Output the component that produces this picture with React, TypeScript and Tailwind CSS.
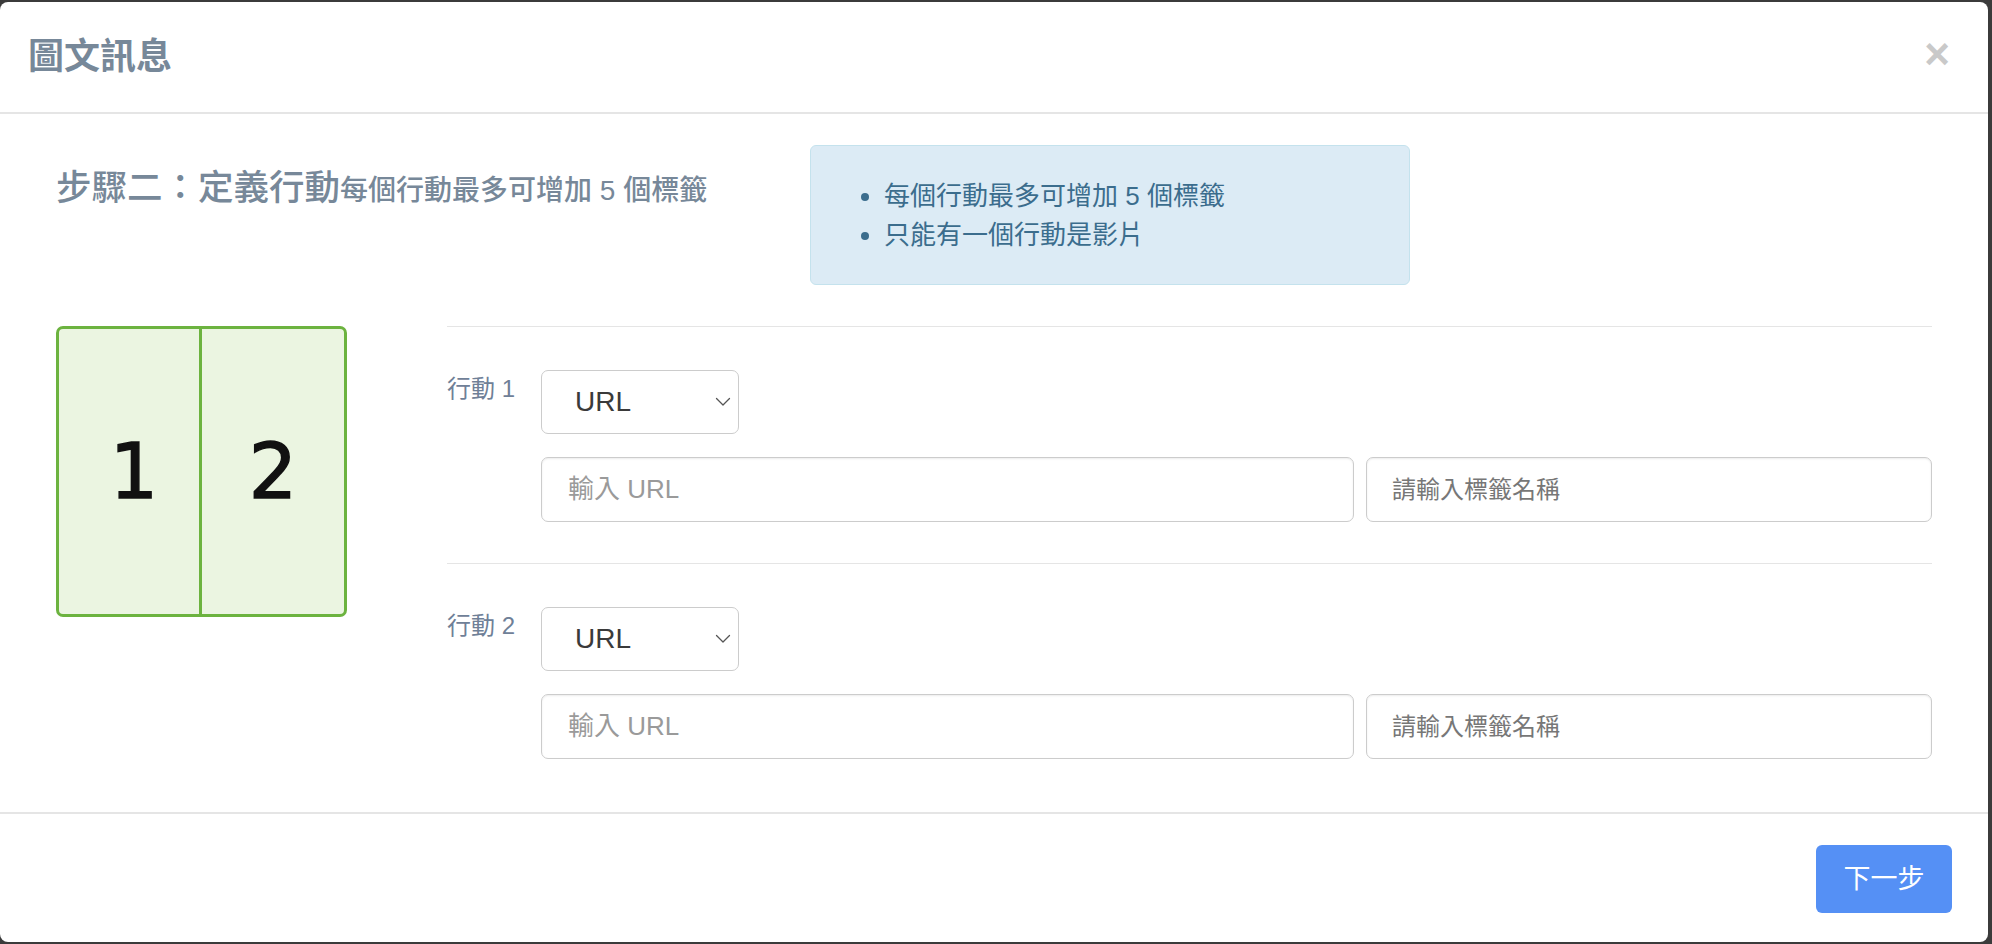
const actions = [1, 2];

const ChevronDown = () => (
  <svg width="16" height="10" viewBox="0 0 16 10" fill="none">
    <path d="M1.5 1.5 8 8l6.5-6.5" stroke="#555" strokeWidth="1.3" strokeLinecap="round" strokeLinejoin="round" />
  </svg>
);

const ActionRow = ({ n }: { n: number }) => {
  return (
    <div className="border-t border-[#e5e5e5] pt-[43px] pb-[41px] flex">
      <div className="w-[94px] shrink-0 pt-[2px] text-[24px] leading-[34px] text-[#6f8097]">
        行動 {n}
      </div>
      <div className="flex-1">
        <div className="w-[198px] h-[64px] border border-[#cccccc] rounded-[7px] bg-white flex items-center justify-between pl-[33px] pr-[7px]">
          <span className="text-[28px] text-[#3a3a3a]">URL</span>
          <ChevronDown />
        </div>
        <div className="mt-[23px] flex gap-[12px]">
          <div className="w-[813px] h-[65px] border border-[#cccccc] rounded-[7px] bg-white shadow-[inset_0_1px_2px_rgba(0,0,0,0.08)] flex items-center pl-[26px] text-[26px] text-[#9a9a9a]">
            輸入 URL
          </div>
          <div className="flex-1 h-[65px] border border-[#cccccc] rounded-[7px] bg-white shadow-[inset_0_1px_2px_rgba(0,0,0,0.08)] flex items-center pl-[25px] text-[24px] text-[#777777]">
            請輸入標籤名稱
          </div>
        </div>
      </div>
    </div>
  );
};

export default function App() {
  return (
    <div
      className="w-[1992px] h-[944px] bg-[#3b3b3b] pt-[2px] pr-[4px] pb-[2px]"
      style={{ fontFamily: '"Liberation Sans", "Noto Sans CJK TC", sans-serif' }}
    >
      <div className="h-[940px] bg-white rounded-[8px] flex flex-col overflow-hidden">
        {/* Header */}
        <div className="h-[112px] shrink-0 border-b-2 border-[#e5e5e5] flex items-center justify-between pl-[28px] pr-[38px]">
          <h4 className="text-[36px] font-bold text-[#778899] leading-none">圖文訊息</h4>
          <span className="text-[44px] font-bold text-[#c9c9c9] leading-none -mt-[6px]">×</span>
        </div>

        {/* Body */}
        <div className="flex-1 px-[56px] pt-[31px]">
          <div className="flex items-start">
            <h3 className="w-[754px] mt-[23px] text-[35.5px] font-medium leading-[40px] text-[#778899]">
              步驟二：定義行動<small className="text-[28px]">每個行動最多可增加 5 個標籤</small>
            </h3>
            <div className="w-[600px] h-[140px] bg-[#dcebf5] border border-[#c4e2ed] rounded-[6px] pt-[31px] px-[20px] text-[#3b6d8d]">
              <ul className="list-disc pl-[53px] text-[26px] leading-[39px]">
                <li>每個行動最多可增加 5 個標籤</li>
                <li>只能有一個行動是影片</li>
              </ul>
            </div>
          </div>

          <div className="mt-[41px] flex gap-[100px]">
            <div
              className="w-[291px] h-[291px] shrink-0 border-[3px] border-[#6cb33f] rounded-[7px] bg-[#ebf5e1] flex text-[76px] text-[#111] [-webkit-text-stroke:1.5px_#111]"
              style={{ fontFamily: '"DejaVu Sans", sans-serif' }}
            >
              <div className="w-[143px] shrink-0 border-r-[3px] border-[#6cb33f] flex items-center justify-center">
                <span className="ml-[10px]">1</span>
              </div>
              <div className="flex-1 flex items-center justify-center">2</div>
            </div>
            <div className="flex-1">
              {actions.map((n) => (
                <ActionRow key={n} n={n} />
              ))}
            </div>
          </div>
        </div>

        {/* Footer */}
        <div className="h-[130px] shrink-0 border-t-2 border-[#e5e5e5] flex items-center justify-end pr-[36px]">
          <button className="w-[136px] h-[68px] rounded-[6px] bg-[#5590f5] text-white text-[27px] mt-[2px]">
            下一步
          </button>
        </div>
      </div>
    </div>
  );
}
